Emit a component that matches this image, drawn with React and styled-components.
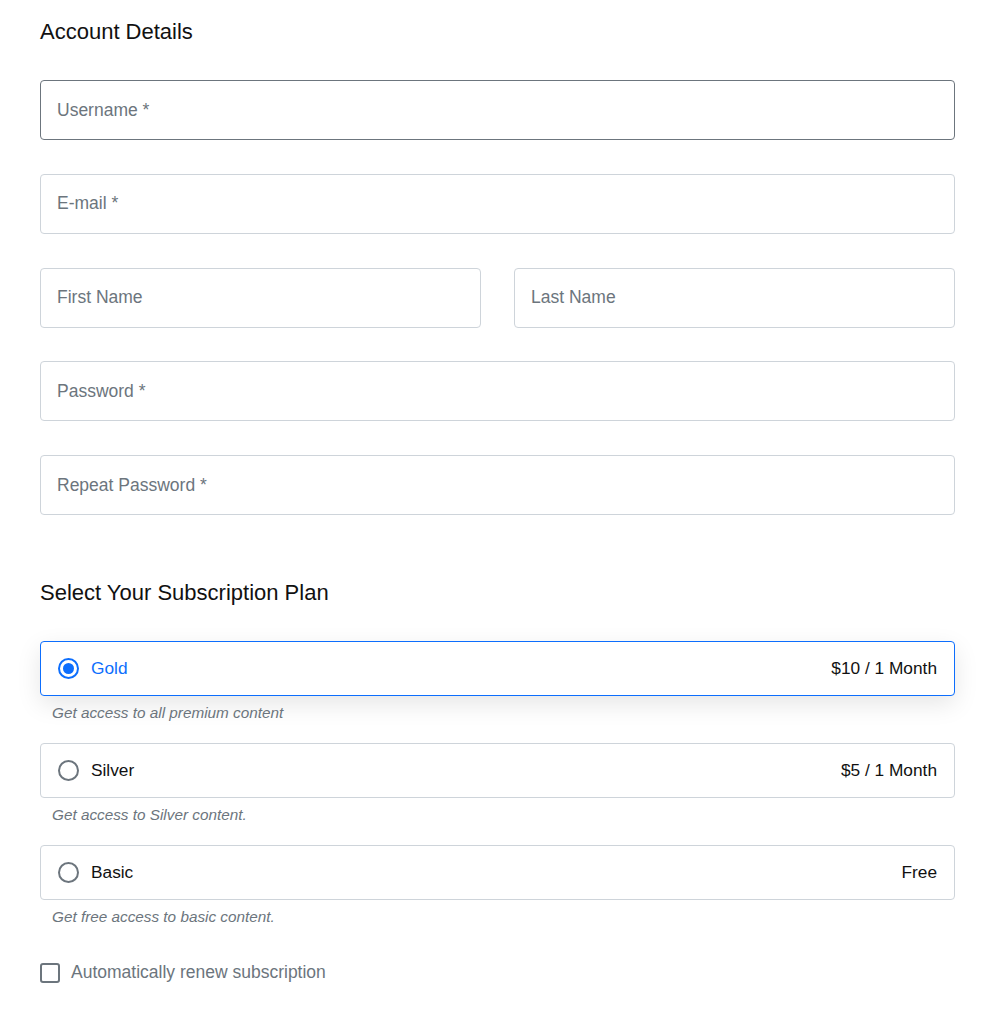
import styled, { createGlobalStyle } from 'styled-components'

const plans = [
  { id: 'gold', name: 'Gold', price: '$10 / 1 Month', note: 'Get access to all premium content' },
  { id: 'silver', name: 'Silver', price: '$5 / 1 Month', note: 'Get access to Silver content.' },
  { id: 'basic', name: 'Basic', price: 'Free', note: 'Get free access to basic content.' },
]

export default function App() {
  const selected = 'gold'
  return (
    <>
      <GlobalStyle />
      <Page>
        <Heading>Account Details</Heading>
        <Fields>
          <Input placeholder="Username *" $hover />
          <Input placeholder="E-mail *" />
          <Row>
            <Input placeholder="First Name" />
            <Input placeholder="Last Name" />
          </Row>
          <Input placeholder="Password *" type="password" />
          <Input placeholder="Repeat Password *" type="password" />
        </Fields>

        <PlanHeading>Select Your Subscription Plan</PlanHeading>
        <Plans>
          {plans.map((p) => (
            <Plan key={p.id}>
              <PlanCard $active={p.id === selected}>
                <Radio $checked={p.id === selected} />
                <PlanName $active={p.id === selected}>{p.name}</PlanName>
                <Price>{p.price}</Price>
              </PlanCard>
              <Note>{p.note}</Note>
            </Plan>
          ))}
        </Plans>

        <CheckRow>
          <Box />
          <span>Automatically renew subscription</span>
        </CheckRow>
      </Page>
    </>
  )
}

const GlobalStyle = createGlobalStyle`
  body {
    margin: 0;
    background: #fff;
    font-family: "Liberation Sans", Arial, sans-serif;
    color: #111;
  }
  * { box-sizing: border-box; }
`

const Page = styled.div`
  padding: 19px 41px 40px 40px;
`

const Heading = styled.h2`
  margin: 0;
  font-size: 22px;
  line-height: 26px;
  font-weight: 400;
  color: #111;
`

const Fields = styled.div`
  display: flex;
  flex-direction: column;
  gap: 33.75px;
  margin-top: 35px;
`

const Row = styled.div`
  display: grid;
  grid-template-columns: 1fr 1fr;
  gap: 33px;
`

const Input = styled.input`
  width: 100%;
  height: 60px;
  padding: 0 16px;
  border: 1px solid ${(p) => (p.$hover ? '#6c757d' : '#ced4da')};
  border-radius: 4px;
  font-family: inherit;
  font-size: 17.5px;
  color: #212529;
  background: #fff;
  outline: none;

  &::placeholder {
    color: #6c757d;
  }
`

const PlanHeading = styled(Heading)`
  margin-top: 65px;
`

const Plans = styled.div`
  margin-top: 35px;
  display: flex;
  flex-direction: column;
`

const Plan = styled.div`
  margin-bottom: 21px;
`

const PlanCard = styled.div`
  display: flex;
  align-items: center;
  height: 55px;
  padding: 0 17px;
  border: 1px solid ${(p) => (p.$active ? '#0d6efd' : '#ced4da')};
  border-radius: 4px;
  background: #fff;
  box-shadow: ${(p) => (p.$active ? '0 8px 24px rgba(0, 0, 0, 0.1)' : 'none')};
`

const Radio = styled.span`
  position: relative;
  width: 21px;
  height: 21px;
  flex: none;
  border-radius: 50%;
  border: 2px solid ${(p) => (p.$checked ? '#0d6efd' : '#6c757d')};

  &::after {
    content: '';
    display: ${(p) => (p.$checked ? 'block' : 'none')};
    position: absolute;
    inset: 3px;
    border-radius: 50%;
    background: #0d6efd;
  }
`

const PlanName = styled.span`
  margin-left: 12px;
  font-size: 17.3px;
  color: ${(p) => (p.$active ? '#0d6efd' : '#111')};
`

const Price = styled.span`
  margin-left: auto;
  font-size: 17.3px;
  color: #111;
`

const Note = styled.div`
  margin-top: 8px;
  padding-left: 12px;
  font-size: 15.3px;
  line-height: 18px;
  font-style: italic;
  color: #6c757d;
`

const CheckRow = styled.label`
  display: flex;
  align-items: center;
  gap: 11px;
  margin-top: 15px;
  font-size: 17.5px;
  color: #6c757d;
`

const Box = styled.span`
  width: 20px;
  height: 20px;
  border: 2px solid #6c757d;
  border-radius: 3px;
`
